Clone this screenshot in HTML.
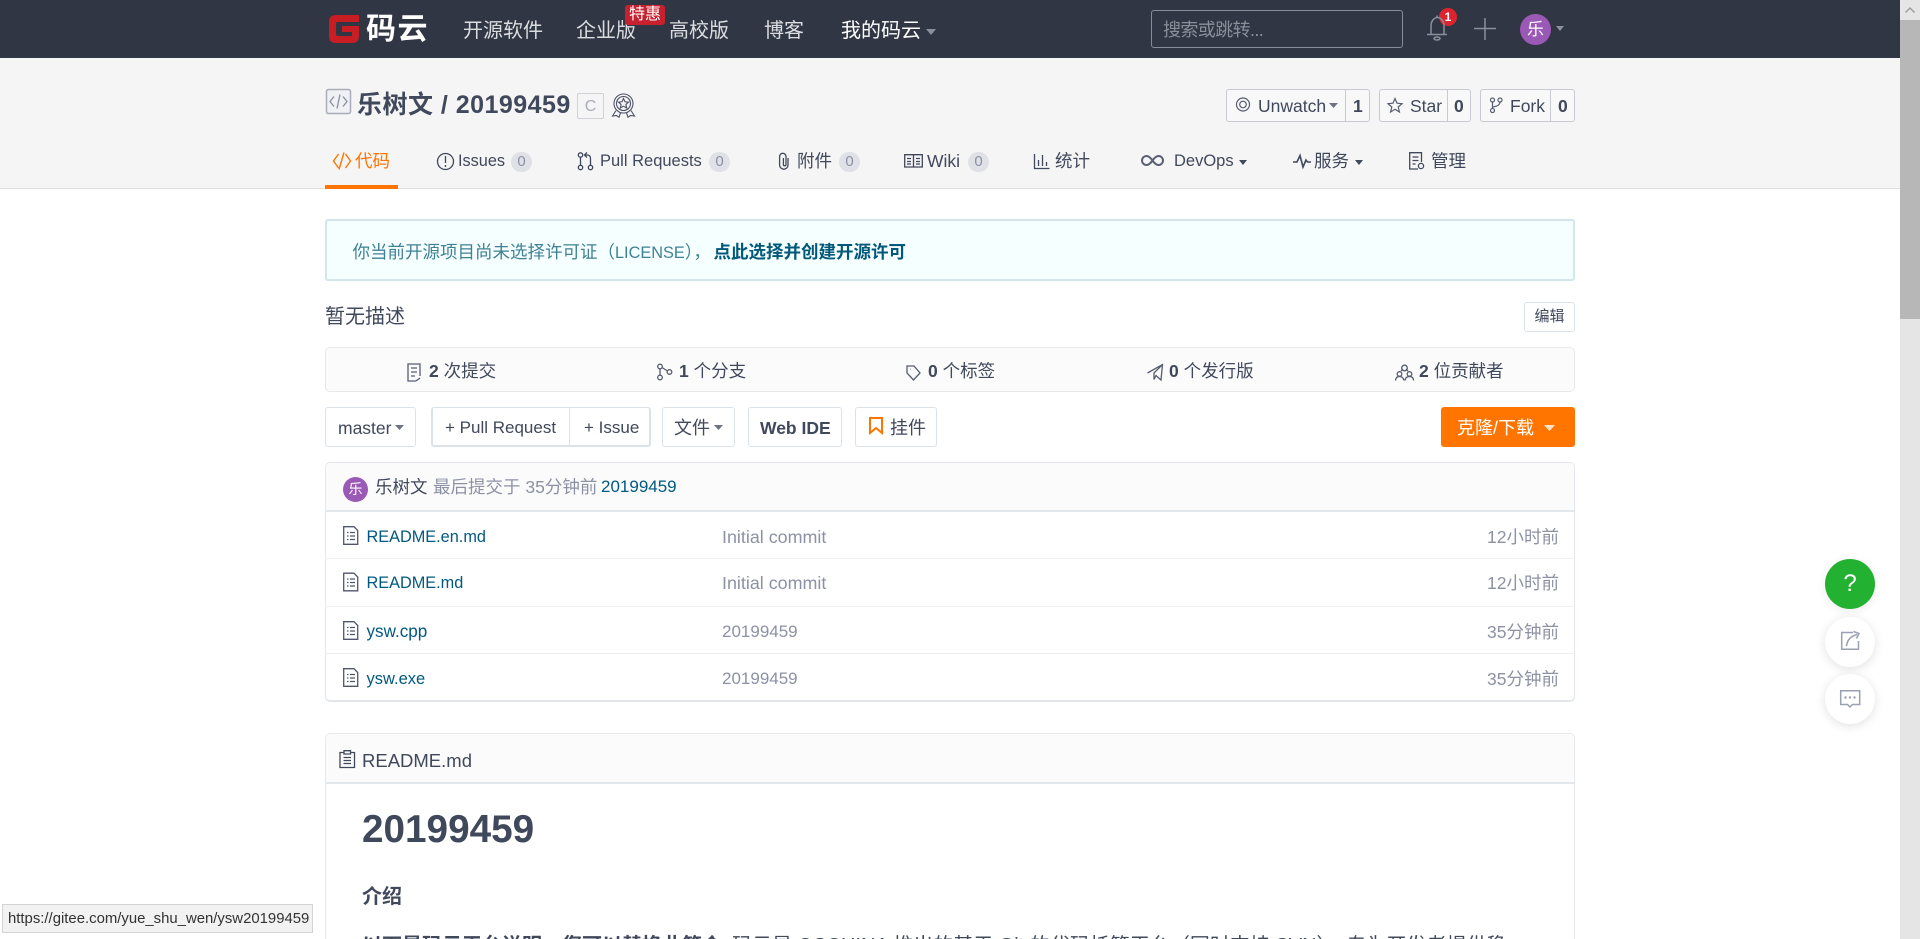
<!DOCTYPE html>
<html lang="zh"><head><meta charset="utf-8"><title>20199459</title>
<style>
html,body{margin:0;padding:0;width:1920px;height:939px;overflow:hidden;background:#fff}
body{position:relative;font-family:"Liberation Sans","Noto Sans CJK SC",sans-serif;color:#40485b}
.b{position:absolute;box-sizing:border-box}
.t{position:absolute;white-space:nowrap;height:30px;line-height:30px;font-size:17.5px}
.g{color:#8c92a4}.l{color:#005980}.h{font-size:20px;color:#dcdde1}
.n{position:absolute;width:21px;height:20px;border-radius:10px;background:#dfe1e6;color:#8c92a4;font-size:15px;line-height:20px;text-align:center;top:152px}
.btn{position:absolute;box-sizing:border-box;top:407px;height:40px;background:#fff;border:1px solid #dce3e8;border-radius:3px}
.rs{position:absolute;left:325px;width:1250px;height:1px;background:#eef0f3}
.bt{position:absolute;box-sizing:border-box;top:89px;height:33px;background:#f8f8f8;border:1px solid #c8cad2;border-radius:3px}
.dv{position:absolute;top:90px;width:1px;height:31px;background:#c8cad2}
b{font-weight:700}
svg{position:absolute;left:0;top:0}
</style></head><body>
<!-- top bar -->
<div class="b" style="left:0;top:0;width:1900px;height:58px;background:#303643"></div>
<div class="t" style="left:366px;top:12px;font-size:30px;font-weight:700;color:#fff;letter-spacing:1.5px;height:36px;line-height:36px">码云</div>
<div class="t h" style="left:463px;top:16px">开源软件</div>
<div class="t h" style="left:576px;top:16px">企业版</div>
<div class="b" style="left:625px;top:5px;width:40px;height:20px;background:#c7202e;border-radius:3px;color:#fff;font-size:16px;line-height:20px;text-align:center">特惠</div>
<div class="t h" style="left:669px;top:16px">高校版</div>
<div class="t h" style="left:764px;top:16px">博客</div>
<div class="t h" style="left:841px;top:16px;color:#fff">我的码云</div>
<div class="b" style="left:1151px;top:10px;width:252px;height:38px;border:1px solid #878c98;border-radius:3px"></div>
<div class="t" style="left:1163px;top:15px;color:#8a8f9a;font-size:18px;letter-spacing:-.6px">搜索或跳转...</div>
<div class="b" style="left:1520px;top:14px;width:31px;height:31px;border-radius:50%;background:#9b59b6;color:#fff;font-size:17px;line-height:31px;text-align:center">乐</div>
<div class="b" style="left:1439px;top:8px;width:18px;height:18px;border-radius:50%;background:#dc2330;color:#fff;font-size:12px;font-weight:700;line-height:18px;text-align:center">1</div>

<!-- sub header -->
<div class="b" style="left:0;top:58px;width:1900px;height:131px;background:#f5f5f5;border-bottom:1px solid #e0e0e0"></div>
<div class="b" style="left:325px;top:185px;width:73px;height:4px;background:#ff7500"></div>
<div class="t" style="left:357px;top:89px;font-size:25px;font-weight:700;height:32px;line-height:32px;letter-spacing:.48px">乐树文 / 20199459</div>
<div class="b" style="left:577px;top:93px;width:27px;height:26px;border:1px solid #d0d2d8;border-radius:2px;color:#a9adb9;font-size:16px;line-height:26px;text-align:center">C</div>

<div class="t" style="left:355px;top:146px;color:#ff7500">代码</div>
<div class="t" style="left:458px;top:146px;font-size:16.3px">Issues</div><div class="n" style="left:511px">0</div>
<div class="t" style="left:600px;top:146px;font-size:16.5px">Pull Requests</div><div class="n" style="left:709px">0</div>
<div class="t" style="left:797px;top:146px">附件</div><div class="n" style="left:839px">0</div>
<div class="t" style="left:927px;top:146px">Wiki</div><div class="n" style="left:968px">0</div>
<div class="t" style="left:1055px;top:146px">统计</div>
<div class="t" style="left:1174px;top:146px;font-size:16.5px">DevOps</div>
<div class="t" style="left:1314px;top:146px">服务</div>
<div class="t" style="left:1431px;top:146px">管理</div>

<div class="bt" style="left:1226px;width:144px"></div><div class="dv" style="left:1345px"></div>
<div class="t" style="left:1258px;top:91px">Unwatch</div><div class="t" style="left:1353px;top:91px;font-weight:700">1</div>
<div class="bt" style="left:1379px;width:92px"></div><div class="dv" style="left:1447px"></div>
<div class="t" style="left:1410px;top:91px">Star</div><div class="t" style="left:1454px;top:91px;font-weight:700">0</div>
<div class="bt" style="left:1480px;width:95px"></div><div class="dv" style="left:1550px"></div>
<div class="t" style="left:1510px;top:91px">Fork</div><div class="t" style="left:1558px;top:91px;font-weight:700">0</div>

<!-- alert -->
<div class="b" style="left:325px;top:219px;width:1250px;height:62px;background:#f6ffff;border:2px solid #d2e6ec;border-radius:3px"></div>
<div class="t" style="left:352.500px;top:237px;color:#3f8194">你当前开源项目尚未选择许可证（<span style="font-size:16.3px">LICENSE</span>），</div>
<div class="t" style="left:713.500px;top:237px;font-weight:700;color:#00587a">点此选择并创建开源许可</div>

<div class="t" style="left:325px;top:302px;font-size:20px">暂无描述</div>
<div class="b" style="left:1524px;top:302px;width:51px;height:30px;border:1px solid #dce3e8;border-radius:3px;background:#fff;font-size:15px;line-height:28px;text-align:center">编辑</div>

<!-- stats -->
<div class="b" style="left:325px;top:347px;width:1250px;height:45px;background:#fbfbfb;border:1px solid #e6e8eb;border-radius:5px"></div>
<div class="t" style="left:429px;top:356px"><b>2</b> 次提交</div>
<div class="t" style="left:679px;top:356px"><b>1</b> 个分支</div>
<div class="t" style="left:928px;top:356px"><b>0</b> 个标签</div>
<div class="t" style="left:1169px;top:356px"><b>0</b> 个发行版</div>
<div class="t" style="left:1419px;top:356px"><b>2</b> 位贡献者</div>

<!-- toolbar -->
<div class="btn" style="left:325px;width:91px"></div>
<div class="t" style="left:338px;top:413px">master</div>
<div class="btn" style="left:431px;width:220px;border-left-width:2px;border-bottom-width:2px;border-right-width:2px"></div>
<div class="b" style="left:569px;top:408px;width:1px;height:38px;background:#dce3e8"></div>
<div class="t" style="left:445px;top:413px;font-size:17px">+ Pull Request</div>
<div class="t" style="left:584px;top:413px;font-size:17px">+ Issue</div>
<div class="btn" style="left:662px;width:73px"></div>
<div class="t" style="left:674px;top:413px;font-size:18px">文件</div>
<div class="btn" style="left:748px;width:94px"></div>
<div class="t" style="left:760px;top:413px;font-weight:700">Web IDE</div>
<div class="btn" style="left:855px;width:82px"></div>
<div class="t" style="left:890px;top:413px;font-size:18px">挂件</div>
<div class="b" style="left:1441px;top:407px;width:134px;height:40px;background:#ff7500;border-radius:3px"></div>
<div class="t" style="left:1457px;top:413px;color:#fff;font-size:18px">克隆/下载</div>

<!-- files -->
<div class="b" style="left:325px;top:462px;width:1250px;height:240px;border:1px solid #e3e7eb;border-bottom-width:2px;border-radius:5px;background:#fff"></div>
<div class="b" style="left:326px;top:463px;width:1248px;height:49px;background:#fbfbfc;border-bottom:2px solid #e3e8ed;border-radius:5px 5px 0 0"></div>
<div class="b" style="left:343px;top:477px;width:25px;height:25px;border-radius:50%;background:#9b59b6;color:#fff;font-size:14px;line-height:25px;text-align:center">乐</div>
<div class="t" style="left:375px;top:472px">乐树文</div>
<div class="t g" style="left:433px;top:472px">最后提交于 35分钟前</div>
<div class="t l" style="left:601px;top:472px;font-size:17px">20199459</div>
<div class="rs" style="top:558px"></div><div class="rs" style="top:606px"></div><div class="rs" style="top:653px"></div>
<div class="t l" style="left:366.500px;top:522px;font-size:16.3px">README.en.md</div><div class="t g" style="left:722px;top:522px;font-size:17.9px">Initial commit</div><div class="t g" style="right:361px;top:522px">12小时前</div>
<div class="t l" style="left:366.500px;top:568px;font-size:16.3px">README.md</div><div class="t g" style="left:722px;top:568px;font-size:17.9px">Initial commit</div><div class="t g" style="right:361px;top:568px">12小时前</div>
<div class="t l" style="left:366.500px;top:617px;font-size:17.1px">ysw.cpp</div><div class="t g" style="left:722px;top:617px;font-size:17px">20199459</div><div class="t g" style="right:361px;top:617px">35分钟前</div>
<div class="t l" style="left:366.500px;top:664px;font-size:16.5px">ysw.exe</div><div class="t g" style="left:722px;top:664px;font-size:17px">20199459</div><div class="t g" style="right:361px;top:664px">35分钟前</div>

<!-- readme -->
<div class="b" style="left:325px;top:733px;width:1250px;height:220px;border:1px solid #e6e8eb;border-radius:5px;background:#fff"></div>
<div class="b" style="left:326px;top:734px;width:1248px;height:50px;background:#fbfbfb;border-bottom:2px solid #e3e8ed;border-radius:5px 5px 0 0"></div>
<div class="t" style="left:362px;top:746px;font-size:18.5px">README.md</div>
<div class="t" style="left:362px;top:805px;font-size:38.7px;font-weight:700;height:50px;line-height:50px">20199459</div>
<div class="t" style="left:362px;top:882px;font-size:20px;font-weight:700">介绍</div>
<div class="t" style="left:362px;top:931px;font-size:20px"><b>以下是码云平台说明，您可以替换此简介</b><span style="margin-left:4.5px"> 码云是 OSCHINA 推出的基于 Git 的代码托管平台（同时支持 SVN）。专为开发者提供稳</span></div>

<!-- status tooltip -->
<div class="b" style="left:2px;top:904px;width:311px;height:29px;background:#f2f2f2;border:1px solid #d3d3d3;font-size:14.9px;line-height:29px;padding-left:5px;color:#333;white-space:nowrap">https://gitee.com/yue_shu_wen/ysw20199459</div>

<!-- float -->
<div class="b" style="left:1825px;top:559px;width:50px;height:50px;border-radius:50%;background:#22b131;color:#fff;font-size:24px;line-height:50px;text-align:center;box-shadow:0 2px 10px rgba(0,0,0,.08)">?</div>
<div class="b" style="left:1825px;top:617px;width:50px;height:50px;border-radius:50%;background:#fff;box-shadow:0 2px 10px rgba(0,0,0,.12)"></div>
<div class="b" style="left:1825px;top:674px;width:50px;height:50px;border-radius:50%;background:#fff;box-shadow:0 2px 10px rgba(0,0,0,.12)"></div>

<!-- scrollbar -->
<div class="b" style="left:1900px;top:0;width:20px;height:939px;background:#e5e5e5"></div>
<div class="b" style="left:1900px;top:20px;width:20px;height:299px;background:#b7b7b7"></div>

<svg width="1920" height="939" viewBox="0 0 1920 939" fill="none">
<defs>
<g id="f" stroke="#4f566a" stroke-width="1.3"><path d="M343.7 526.7H354L357.7 530.5V544.3H343.7Z"/><path d="M347 532.5h1.5M350 532.5h5M347 536h1.5M350 536h5M347 539.5h1.5M350 539.5h5"/></g>
</defs>
<!-- logo -->
<path fill="#c71d23" d="M359 15H336Q329 15 329 22V36Q329 43 336 43H352Q359 43 359 36V26H342V32H352V35Q352 36 351 36H338Q336 36 336 34V24Q336 22 338 22H359Z"/>
<!-- carets -->
<g fill="#8a8f9a"><path d="M926 29h10l-5 6z"/><path d="M1556 26h8l-4 5z"/></g>
<path fill="#6d7380" d="M1329 103h9l-4.500 5z"/>
<g fill="#40485b"><path d="M1239 160h8l-4 5z"/><path d="M1355 160h8l-4 5z"/></g>
<g fill="#6d7380"><path d="M395 425h9l-4.500 5z"/><path d="M714 425h9l-4.500 5z"/></g>
<path fill="#ffe3c8" d="M1544 425h11l-5.500 6z"/>
<!-- bell, plus -->
<g stroke="#8a8f9a" stroke-width="1.500"><path d="M1431 34V26a6.500 8.500 0 0 1 13 0V34M1427 34.500H1447M1437 15.500V17.500"/><ellipse cx="1437" cy="38.500" rx="3" ry="1.500"/><path d="M1474 28.500H1496M1485 18V40"/></g>
<!-- repo icon -->
<rect x="326.500" y="89.500" width="24" height="24" rx="2" fill="#f0f1f5" stroke="#a9adb9" stroke-width="1.500"/>
<path stroke="#8a90a2" stroke-width="1.300" d="M334 96.500l-4 5 4 5M343 96.500l4 5-4 5M340 94.500l-3 14"/>
<!-- award -->
<g stroke="#4b5266" stroke-width="1.100"><circle cx="623.500" cy="103.500" r="9.500"/><circle cx="623.500" cy="103.500" r="7"/><path d="M623.500 98.500l1.500 3.300 3.500.4-2.600 2.300.8 3.500-3.200-1.800-3.200 1.800.8-3.500-2.600-2.300 3.500-.4z"/><path d="M616 110.500l-3.500 5.500 4-.5 2.500 1.800 1.500-4.500M631 110.500l3.500 5.500-4-.5-2.500 1.800-1.500-4.500"/></g>
<!-- code tab -->
<path stroke="#ff7500" stroke-width="1.400" d="M338.500 154l-5 7 5 7M345.500 154l5 7-5 7M344 152.500l-5 17"/>
<!-- tab icons -->
<g stroke="#40485b" stroke-width="1.300">
<circle cx="445.500" cy="161.500" r="8"/><path d="M445.500 156v7M445.500 165v2"/>
<circle cx="580.500" cy="155" r="2.200"/><circle cx="580.500" cy="167.500" r="2.200"/><circle cx="590.500" cy="167.500" r="2.200"/><path d="M580.500 157.500V165M590.500 165V158.500Q590.500 155 587 155H585M587 152.500L584.500 155 587 157.500"/>
<path d="M788 158V165a4.200 4.200 0 0 1-8.400 0V156.500a3.200 3.200 0 0 1 6.400 0V164.500a1.300 1.300 0 0 1-2.600 0V158"/>
<path d="M904.700 154.700H922.300V167H904.700ZM913.500 154.700V167M907 158.500h4M907 161.500h4M907 164h4M916 158.500h4M916 161.500h4M916 164h4"/>
<path d="M1034.500 154V168.500H1049.500M1038.500 166V160M1042.500 166V155M1046.500 166V162"/>
<path stroke-width="1.600" d="M1293 162H1297L1300 155.500 1303 167 1306 160 1307.500 162H1311"/>
<path d="M1421.500 162V152.700H1409.700V169H1418M1412.500 157h6M1412.500 160.500h6M1412.500 164h3"/><circle cx="1421" cy="166" r="2.600"/>
</g>
<path stroke="#5a6072" stroke-width="2" d="M1152.500 160.500C1150 157 1148.500 156 1146.500 156A4.500 4.500 0 0 0 1146.500 165C1148.500 165 1150 164 1152.500 160.500C1155 157 1156.500 156 1158.500 156A4.500 4.500 0 0 1 1158.500 165C1156.500 165 1155 164 1152.500 160.500Z"/>
<!-- action icons -->
<g stroke="#565d70" stroke-width="1.200">
<circle cx="1243" cy="104.500" r="6.500"/><circle cx="1243" cy="104.500" r="3.300"/>
<path d="M1395 98.500l2 4.700 5 .5-3.800 3.300 1.200 5-4.400-2.700-4.400 2.700 1.200-5-3.800-3.300 5-.5z"/>
<circle cx="1492.500" cy="100" r="2"/><circle cx="1500" cy="100" r="2"/><circle cx="1492.500" cy="110.500" r="2"/><path d="M1492.500 102V108.500M1500 102Q1500 106 1492.500 107"/>
</g>
<!-- stats icons -->
<g stroke="#565d70" stroke-width="1.300">
<path d="M420 376V364H408V381H416M411 368h6M411 372h6M411 376h4M416 381l4-3"/>
<circle cx="660" cy="366.500" r="2.300"/><circle cx="660" cy="377.500" r="2.300"/><circle cx="669.500" cy="372" r="2.300"/><path d="M660 369V375M662 367.500L667.500 371"/>
<path d="M907 366H914L920 373 913.500 380 907 373ZM910.500 369h.5"/>
<path d="M1147.500 373L1162.500 364.500 1161 380 1156 375.500 1154 379.500V373L1162.500 364.500"/>
<circle cx="1404.500" cy="368" r="2.800"/><circle cx="1399.500" cy="374" r="2.300"/><circle cx="1409.500" cy="374" r="2.300"/><path d="M1395.500 380.500Q1396 376.500 1399.500 376.500T1404 380.500M1405 380.500Q1405.500 376.500 1409.500 376.500T1413.500 380.500M1401 371L1403 369M1408 371L1406 369"/>
</g>
<path stroke="#ff7500" stroke-width="2" d="M870 418H882V433L876 428 870 433Z"/>
<!-- file icons -->
<use href="#f"/><use href="#f" y="46.500"/><use href="#f" y="95"/><use href="#f" y="142"/>
<!-- readme icon -->
<path stroke="#40485b" stroke-width="1.300" d="M344 752.500H340V767.500H354.500V752.500H350.500M344 750.700H350.500V754H344ZM343.500 757.500H351M343.500 760.500H351M343.500 763.500H351"/>
<!-- float icons -->
<g stroke="#9a9fb2" stroke-width="1.500">
<path d="M1853 632.500H1841.700V649.300H1858.500V641M1846.500 646Q1847.500 637 1857 634.500M1853.500 631.500L1859 633.500 1856.500 638.500"/>
<path d="M1840.700 690.700H1859.700V704.500H1852.500L1850 707 1847.500 704.500H1840.700Z"/>
</g>
<g fill="#9a9fb2"><circle cx="1845.500" cy="697.500" r="1.200"/><circle cx="1850" cy="697.500" r="1.200"/><circle cx="1854.500" cy="697.500" r="1.200"/></g>
<!-- scrollbar arrow -->
<path stroke="#9e9e9e" stroke-width="1.500" d="M1905.500 12.500L1910 8 1914.500 12.500"/>
</svg>
</body></html>
